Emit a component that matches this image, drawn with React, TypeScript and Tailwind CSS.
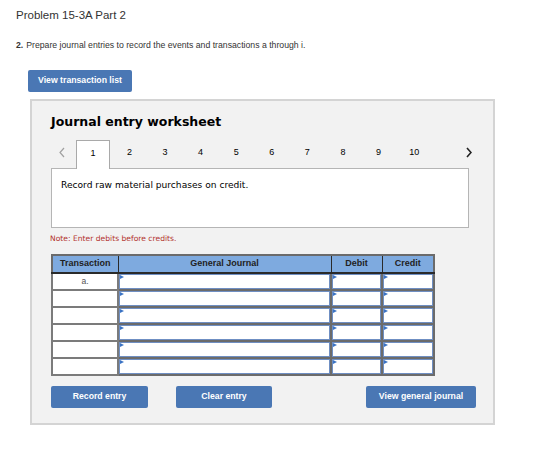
import React from "react"

const tabs = ["1", "2", "3", "4", "5", "6", "7", "8", "9", "10"]
const rows = ["a.", "", "", "", "", ""]

function EntryCell() {
  return (
    <div className="relative h-[15px] border border-[#6f8fc3] bg-white">
      <span className="absolute left-0 top-0 h-0 w-0 border-y-[2.5px] border-l-[4px] border-y-transparent border-l-[#3b73c4]" />
    </div>
  )
}

export default function App() {
  return (
    <div className="min-h-[459px] w-[560px] bg-white font-['Liberation_Sans',Arial,sans-serif] text-[#222]">
      <div className="px-4 pt-[7px]">
        <h1 className="text-[11.5px] leading-[16px] text-[#333]">Problem 15-3A Part 2</h1>
        <p className="mt-[17px] text-[8.7px] leading-[11px] text-[#333]">
          <span className="mr-[3px] font-bold">2.</span>
          Prepare journal entries to record the events and transactions a through i.
        </p>
        <button className="ml-3 mt-[19px] h-[22px] w-[104px] rounded-[2px] bg-[#4a77b4] text-[8.7px] font-bold text-white">
          View transaction list
        </button>
      </div>

      <div className="ml-[30px] mt-[7px] h-[326px] w-[465px] border-2 border-[#d4d4d4] bg-[#f2f2f2] pl-[19px]">
        <h2 className="mt-[13px] font-['DejaVu_Sans',Verdana,sans-serif] text-[12.5px] font-bold leading-[16px] text-black">
          Journal entry worksheet
        </h2>

        <div className="mt-[10px] flex h-[28px] w-[418px] items-center">
          <span className="flex w-[25px] justify-center pb-[4px] pr-[4px]">
            <svg width="6" height="11" viewBox="0 0 6 11" fill="none">
              <path d="M5 1L1 5.5L5 10" stroke="#a0a0a0" strokeWidth="1.2" />
            </svg>
          </span>
          {tabs.map((t, i) => (
            <div
              key={t}
              className={
                i === 0
                  ? "relative z-10 -mb-px mr-[1.6px] flex h-[29px] w-[34px] items-center justify-center self-end border border-b-0 border-[#a9a9a9] bg-white pb-[2px] text-[9px] text-black"
                  : "flex h-[28px] w-[35.6px] items-center justify-center pb-[3px] text-[9px] text-black"
              }
            >
              {t}
            </div>
          ))}
          <span className="ml-auto flex pb-[4px]">
            <svg className="translate-x-[3px]" width="6" height="11" viewBox="0 0 6 11" fill="none">
              <path d="M1 1L5 5.5L1 10" stroke="#222" strokeWidth="1.6" />
            </svg>
          </span>
        </div>

        <div className="h-[60px] w-[418px] border border-[#b5b5b5] bg-white px-[9px] pt-[10px] font-['DejaVu_Sans',Verdana,sans-serif] text-[9.1px] leading-[12px] text-black">
          Record raw material purchases on credit.
        </div>

        <p className="mt-[6px] -ml-px font-['DejaVu_Sans',Verdana,sans-serif] text-[7.6px] leading-[10px] text-[#b3322e]">
          Note: Enter debits before credits.
        </p>

        <table className="mt-[10px] w-[382px] table-fixed border-collapse border-2 border-[#6b6b6b]">
          <colgroup>
            <col className="w-[66px]" />
            <col className="w-[213px]" />
            <col className="w-[51px]" />
            <col className="w-[52px]" />
          </colgroup>
          <thead>
            <tr className="h-[18px] bg-[#7eaadf] text-[9px] font-bold text-[#222]">
              <th className="border border-b-2 border-[#2a2a2a] p-0">Transaction</th>
              <th className="border border-b-2 border-[#2a2a2a] p-0">General Journal</th>
              <th className="border border-b-2 border-[#2a2a2a] p-0">Debit</th>
              <th className="border border-b-2 border-[#2a2a2a] p-0">Credit</th>
            </tr>
          </thead>
          <tbody>
            {rows.map((r, i) => (
              <tr key={i} className="h-[17px]">
                <td className="border-2 border-[#7b7b7b] bg-white p-0 text-center text-[8.5px] leading-[13px] text-[#555]">
                  {r}
                </td>
                <td className="border-2 border-[#6b6b6b] p-0">
                  <EntryCell />
                </td>
                <td className="border-2 border-[#6b6b6b] p-0">
                  <EntryCell />
                </td>
                <td className="border-2 border-[#6b6b6b] p-0">
                  <EntryCell />
                </td>
              </tr>
            ))}
          </tbody>
        </table>

        <div className="mt-[10px] flex w-[425px] items-center text-[8.7px] font-bold text-white">
          <button className="h-[22px] w-[97px] rounded-[2px] bg-[#4a77b4]">Record entry</button>
          <button className="ml-[28px] h-[22px] w-[96px] rounded-[2px] bg-[#4a77b4]">Clear entry</button>
          <button className="ml-auto h-[22px] w-[110px] rounded-[2px] bg-[#4a77b4]">View general journal</button>
        </div>
      </div>
    </div>
  )
}
